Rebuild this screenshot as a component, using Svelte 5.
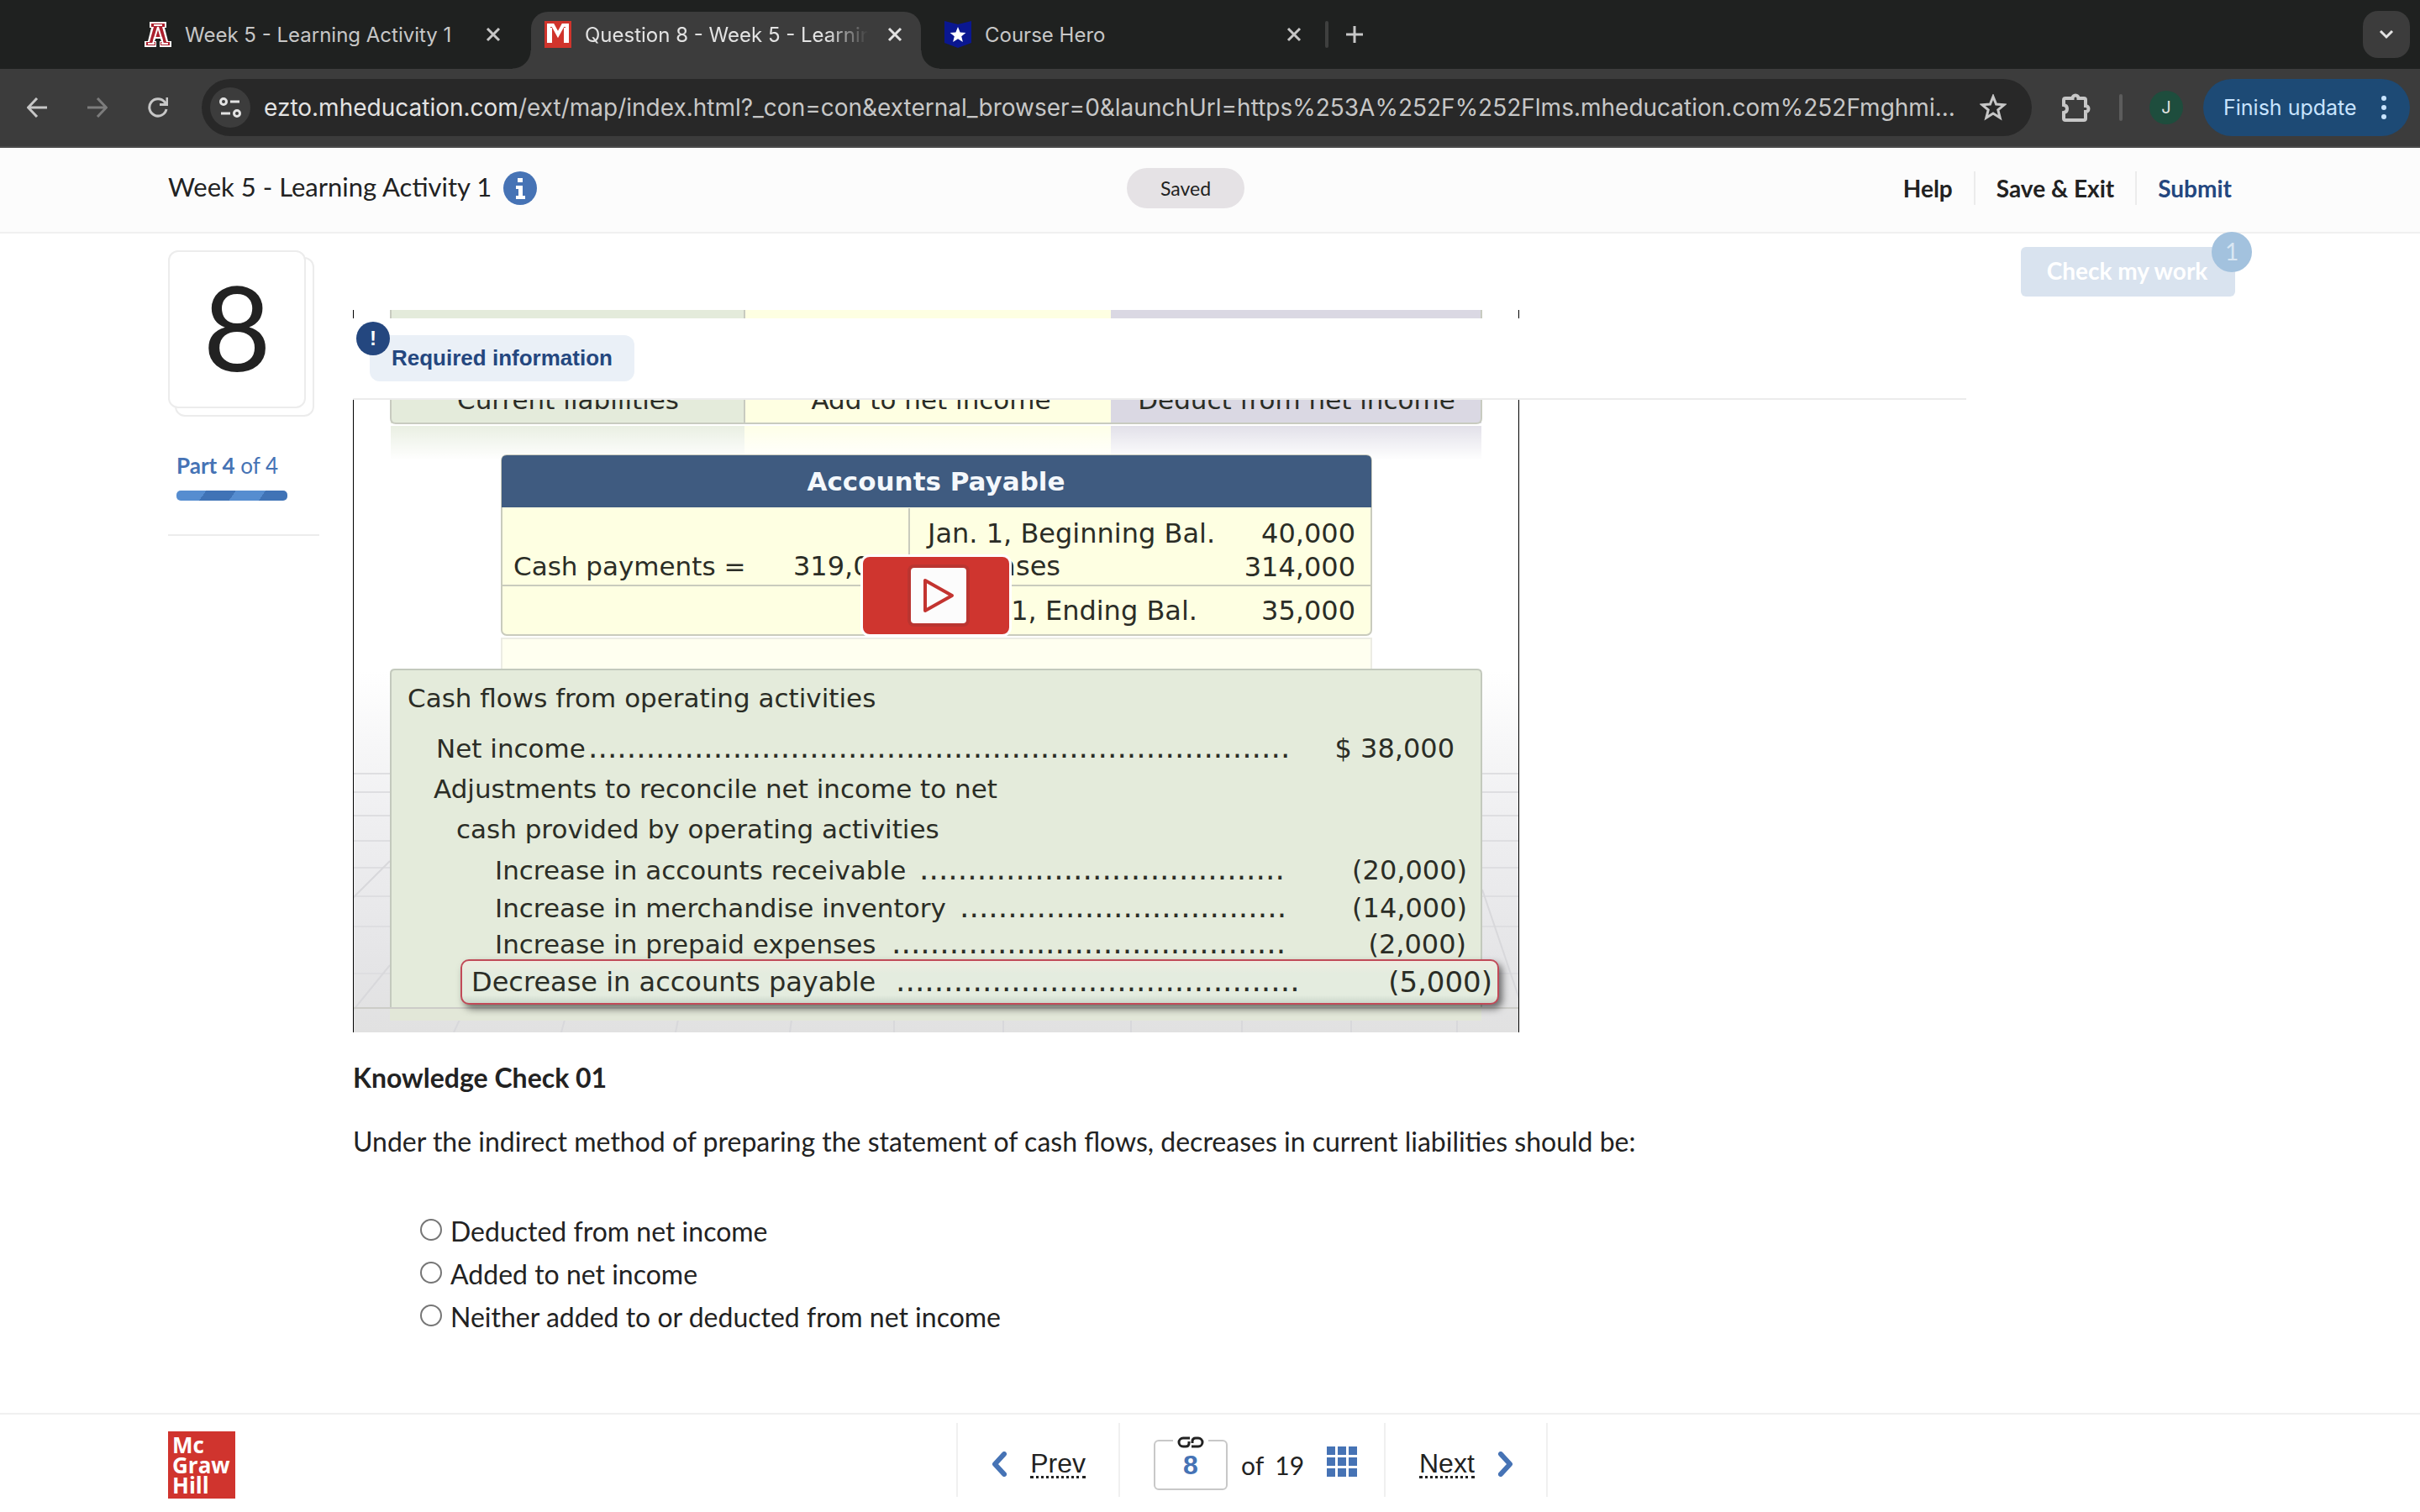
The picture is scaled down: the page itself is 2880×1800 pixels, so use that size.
<script lang="ts">
	const url = {
		host: 'ezto.mheducation.com',
		path: '/ext/map/index.html?_con=con&external_browser=0&launchUrl=https%253A%252F%252Flms.mheducation.com%252Fmghmi...'
	};

	const question = {
		number: 8,
		total: 19,
		heading: 'Knowledge Check 01',
		prompt:
			'Under the indirect method of preparing the statement of cash flows, decreases in current liabilities should be:',
		choices: [
			'Deducted from net income',
			'Added to net income',
			'Neither added to or deducted from net income'
		]
	};

	// lines of the cash flow panel on the slide
	const lines = [
		{ label: 'Cash flows from operating activities', x: 65, y: 473 },
		{ label: 'Net income', x: 99, y: 533, dots: 73, dotsX: 280, amount: '$ 38,000', right: 1311 },
		{ label: 'Adjustments to reconcile net income to net', x: 96, y: 581 },
		{ label: 'cash provided by operating activities', x: 123, y: 629 },
		{ label: 'Increase in accounts receivable', x: 169, y: 678, dots: 38, dotsX: 674, amount: '(20,000)', right: 1326 },
		{ label: 'Increase in merchandise inventory', x: 169, y: 723, dots: 34, dotsX: 722, amount: '(14,000)', right: 1326 },
		{ label: 'Increase in prepaid expenses', x: 169, y: 766, dots: 41, dotsX: 641, amount: '(2,000)', right: 1325 }
	];

	const floorLines = [552, 574, 602, 632, 664, 698, 734, 790];

	let selected = $state('');
	let current = $state(String(question.number));
</script>

<div class="page">
	<div class="tabs">
		<div class="tab first">
			<svg class="favicon" viewBox="0 0 32 32" aria-hidden="true">
				<path d="M6 1h20v7h-2l4 16h4v7H18v-7h2l-1-3h-6l-1 3h2v7H0v-7h4L8 8H6z" fill="#fff" />
				<path d="M8 3h16v4h-3l5 18h4v4H19v-4h3l-1-6H11l-1 6h3v4H2v-4h4L11 7H8z" fill="#ab1f2d" />
				<path d="M11 5h10M16 7l-6 20M16 7l6 20M11 20h10M4 27h8M20 27h8" fill="none" stroke="#fff" stroke-width="2" />
			</svg>
			<span class="tab-title">Week 5 - Learning Activity 1</span>
			<button class="close" aria-label="Close tab">
				<svg viewBox="0 0 18 18"><path d="M2 2l14 14M16 2L2 16" /></svg>
			</button>
		</div>
		<div class="tab active">
			<svg class="favicon" viewBox="0 0 32 32" aria-hidden="true">
				<rect width="32" height="32" fill="#d0342c" />
				<path d="M5 26V5h5l6 11 6-11h5v21M7 26V8M25 26V8" fill="none" stroke="#fff" stroke-width="4" />
			</svg>
			<span class="tab-title fade">Question 8 - Week 5 - Learning</span>
			<button class="close" aria-label="Close tab">
				<svg viewBox="0 0 18 18"><path d="M2 2l14 14M16 2L2 16" /></svg>
			</button>
		</div>
		<div class="tab last">
			<svg class="favicon" viewBox="0 0 32 32" aria-hidden="true">
				<path d="M0 0l16 4 16-4v26l-16 6-16-6z" fill="#0a1790" />
				<path d="M16 7l2.600 6.400 6.800.5-5.200 4.400 1.700 6.700-5.900-3.700-5.900 3.700 1.700-6.700-5.200-4.400 6.800-.5z" fill="#fff" />
			</svg>
			<span class="tab-title">Course Hero</span>
			<button class="close" aria-label="Close tab">
				<svg viewBox="0 0 18 18"><path d="M2 2l14 14M16 2L2 16" /></svg>
			</button>
		</div>
		<span class="tab-divider"></span>
		<button class="new-tab" aria-label="New tab">
			<svg viewBox="0 0 20 20"><path d="M10 0v20M0 10h20" /></svg>
		</button>
		<button class="tab-search" aria-label="Search tabs">
			<svg viewBox="0 0 18 12"><path d="M2 2l7 7 7-7" /></svg>
		</button>
	</div>

	<div class="toolbar">
		<div class="nav-buttons">
			<button aria-label="Back">
				<svg viewBox="0 0 24 24"><path d="M24 12H2M12 1L1.500 12 12 23" /></svg>
			</button>
			<button class="dim" aria-label="Forward">
				<svg viewBox="0 0 24 24"><path d="M0 12h22M12 1l10.500 11L12 23" /></svg>
			</button>
			<button aria-label="Reload">
				<svg viewBox="0 0 24 24"><path d="M22 14a10.200 10.200 0 1 1-2-8.500L22.500 8M23 0v8.500h-9" /></svg>
			</button>
		</div>
		<div class="omnibox">
			<button class="site-info" aria-label="Site information">
				<svg viewBox="0 0 26 26">
					<circle cx="5" cy="6" r="3.500" /><path d="M13 6h11M2 20h11" /><circle cx="21" cy="20" r="3.500" />
				</svg>
			</button>
			<span class="url">{url.host}<span>{url.path}</span></span>
			<button class="star" aria-label="Bookmark">
				<svg viewBox="0 0 32 32">
					<path d="M16 3l3.600 9 9.600.7-7.400 6.200 2.400 9.400-8.200-5.200-8.200 5.200 2.400-9.400L2.800 12.700l9.600-.7z" />
				</svg>
			</button>
		</div>
		<button class="puzzle" aria-label="Extensions">
			<svg viewBox="0 0 34 34">
				<path d="M4 6h8.500a3.500 3.500 0 0 1 7 0H26q2 0 2 2v7a3.500 3.500 0 0 1 0 7v8q0 2-2 2H4q-2 0-2-2v-7q4-.5 4-4.500T2 14V8q0-2 2-2z" />
			</svg>
		</button>
		<span class="tool-divider"></span>
		<span class="avatar">J</span>
		<button class="update">
			Finish update
			<svg viewBox="0 0 6 30"><circle cx="3" cy="4" r="3" /><circle cx="3" cy="15" r="3" /><circle cx="3" cy="26" r="3" /></svg>
		</button>
	</div>

	<header class="assignment">
		<div class="title">
			<h1>Week 5 - Learning Activity 1</h1>
			<button class="info" aria-label="Assignment information">
				<svg viewBox="0 0 40 40">
					<circle cx="20" cy="20" r="20" />
					<path d="M17 8h6v5h-6zM15 17h8v12h3v4H15v-4h3v-8h-3z" />
				</svg>
			</button>
		</div>
		<span class="saved">Saved</span>
		<nav>
			<a href="#help">Help</a>
			<a href="#save">Save &amp; Exit</a>
			<a href="#submit" class="submit">Submit</a>
		</nav>
	</header>

	<main>
		<aside>
			<div class="card-stack">
				<div class="number">{question.number}</div>
			</div>
			<p class="part"><b>Part 4</b> of 4</p>
			<div class="progress"></div>
			<hr />
		</aside>

		<section>
			<div class="actions">
				<button class="check">Check my work<span class="badge">1</span></button>
			</div>

			<div class="viewport">
				<svg class="slide" viewBox="0 0 1388 860" role="img" aria-label="Accounts payable example">
					<defs>
						<linearGradient id="floor" x1="0" y1="0" x2="0" y2="1">
							<stop offset="0.500" stop-color="#ffffff" />
							<stop offset="0.700" stop-color="#efeff1" />
							<stop offset="0.900" stop-color="#e5e5e7" />
							<stop offset="1" stop-color="#e1e1e1" />
						</linearGradient>
						<linearGradient id="mirror" x1="0" y1="0" x2="0" y2="1">
							<stop offset="0" stop-color="#ffffff" stop-opacity="0.200" />
							<stop offset="1" stop-color="#ffffff" />
						</linearGradient>
						<linearGradient id="highlight" x1="0" y1="0" x2="0" y2="1">
							<stop offset="0" stop-color="#f0ece2" />
							<stop offset="0.300" stop-color="#e4ecdf" />
							<stop offset="0.800" stop-color="#e4ecdf" />
							<stop offset="1" stop-color="#c9d5c9" />
						</linearGradient>
					</defs>

					<rect width="1388" height="860" fill="url(#floor)" />
					{#each floorLines as y}
						<path d="M0 {y}h44M1344 {y}h44" stroke="#dedee1" stroke-width="2" />
					{/each}
					<path d="M0 834L44 780M0 700l44-44M1344 690l44 130M120 860l14-30M248 860l8-30M384 860l6-30M520 860l4-30M644 860v-30M774 860v-30M926 860v-30M1058 860v-30M1188 860v-30M1314 860v-30" stroke="#d8d8db" stroke-width="2" />

					<rect x="45" width="421" height="135" fill="#e4ebdb" />
					<rect x="466" width="436" height="135" fill="#feffe2" />
					<rect x="902" width="441" height="135" fill="#dad8e3" />
					<path d="M45 0v129q0 6 6 6h1286q6 0 6-6V0M466 0v135" fill="none" stroke="#c8cbc0" stroke-width="2" />
					<rect x="45" y="138" width="421" height="40" fill="#e4ebdb" />
					<rect x="466" y="138" width="436" height="40" fill="#feffe2" />
					<rect x="902" y="138" width="441" height="40" fill="#dad8e3" />
					<rect x="44" y="137" width="1301" height="42" fill="url(#mirror)" />
					<g text-anchor="middle">
						<text x="256" y="118">Current liabilities</text>
						<text x="688" y="118">Add to net income</text>
						<text x="1123" y="118">Deduct from net income</text>
					</g>

					<rect x="177" y="391" width="1035" height="40" fill="#fffff0" stroke="#ecece4" stroke-width="2" />
					<rect x="177" y="173" width="1035" height="214" rx="6" fill="#feffe2" stroke="#c9cbbd" stroke-width="2" />
					<path d="M177 235v-56q0-6 6-6h1023q6 0 6 6v56z" fill="#3f5b80" />
					<path d="M662 236v92M177 328h1035" stroke="#c9cbbd" stroke-width="2" />
					<text class="table-title" x="694" y="215" text-anchor="middle">Accounts Payable</text>
					<text x="191" y="316">Cash payments =</text>
					<text class="figure" x="524" y="316">319,000</text>
					<text class="figure" x="684" y="277">Jan. 1, Beginning Bal.</text>
					<g class="figure" text-anchor="end">
						<text x="842" y="316">Purchases</text>
						<text x="1005" y="369">Dec. 31, Ending Bal.</text>
						<text x="1193" y="277">40,000</text>
						<text x="1193" y="317">314,000</text>
						<text x="1193" y="369">35,000</text>
					</g>

					<rect x="44" y="427" width="1299" height="404" rx="5" fill="#e4ebdb" />
					<path d="M45 831V433q0-5 5-5h1288q5 0 5 5v398" fill="none" stroke="#c3c9bd" stroke-width="2" />
					<path d="M0 831h1388" stroke="#ccccc8" stroke-width="2" />
					<rect x="44" y="832" width="1299" height="14" fill="#e2e7d8" />
					{#each lines as line}
						<text x={line.x} y={line.y}>{line.label}</text>
						{#if line.dots}
							<text class="leader" x={line.dotsX} y={line.y}>{'.'.repeat(line.dots)}</text>
							<text class="figure" x={line.right} y={line.y} text-anchor="end">{line.amount}</text>
						{/if}
					{/each}

					<rect class="highlight" x="129" y="774" width="1234" height="52" rx="9" fill="url(#highlight)" />
					<text class="figure" x="141" y="811">Decrease in accounts payable</text>
					<text class="leader" x="646" y="811">{'.'.repeat(42)}</text>
					<text class="large" x="1356" y="812" text-anchor="end">(5,000)</text>

					<path d="M0 0h1v860h-1zM1387 0h1v860h-1z" fill="#000" />
				</svg>

				<button class="play" aria-label="Play video">
					<span>
						<svg viewBox="0 0 40 44"><path d="M4 4v36l32-18z" /></svg>
					</span>
				</button>

				<div class="required">
					<span class="alert">!</span>
					<span class="required-label">Required information</span>
				</div>
			</div>

			<h2>{question.heading}</h2>
			<p class="prompt">{question.prompt}</p>
			<div class="choices">
				{#each question.choices as choice}
					<label>
						<input type="radio" name="answer" value={choice} bind:group={selected} />
						{choice}
					</label>
				{/each}
			</div>
		</section>
	</main>

	<footer>
		<div class="logo">
			<span>Mc</span>
			<span>Graw</span>
			<span>Hill</span>
		</div>
		<div class="pager">
			<a class="prev" href="#prev">
				<svg viewBox="0 0 18 30"><path d="M15 3L4 15l11 12" /></svg>
				<span>Prev</span>
			</a>
			<div class="position">
				<label class="jump">
					<svg viewBox="0 0 34 16">
						<path d="M16 3H8a5 5 0 0 0 0 10h3q4 0 4-4V7M18 13h8a5 5 0 0 0 0-10h-3q-4 0-4 4v2" />
					</svg>
					<input aria-label="Question number" bind:value={current} />
				</label>
				<span class="total">of <span>{question.total}</span></span>
				<button class="grid" aria-label="All questions">
					<svg viewBox="0 0 36 36">
						{#each [0, 13, 26] as y}
							{#each [0, 13, 26] as x}
								<rect {x} {y} width="10" height="10" />
							{/each}
						{/each}
					</svg>
				</button>
			</div>
			<a class="next" href="#next">
				<span>Next</span>
				<svg viewBox="0 0 18 30"><path d="M3 3l11 12L3 27" /></svg>
			</a>
		</div>
	</footer>
</div>

<style>
	:global(body) {
		background: #fff;
	}

	.page {
		display: flex;
		flex-direction: column;
		min-height: 100vh;
		font-family: Lato, sans-serif;
		font-size: 32px;
		color: #222;
	}

	button {
		padding: 0;
		border: none;
		background: none;
		font: inherit;
		color: inherit;
		cursor: pointer;
	}

	svg {
		display: block;
	}

	a {
		color: inherit;
		text-decoration: none;
	}

	h1,
	h2,
	p {
		margin: 0;
	}

	/* browser chrome */
	.tabs {
		display: flex;
		align-items: center;
		height: 82px;
		background: #1f2120;
		color: #c7c7c7;
		font-family: Inter, sans-serif;
		font-size: 24px;
	}

	.tab {
		display: flex;
		align-items: center;
		gap: 16px;
		box-sizing: border-box;
		height: 68px;
	}

	.tab.first {
		width: 632px;
		padding: 0 36px 0 172px;
	}

	.tab.active {
		position: relative;
		align-self: flex-end;
		width: 464px;
		padding: 0 22px 14px 16px;
		border-radius: 20px 20px 0 0;
		background: #3c3c3c;
		color: #e3e3e3;
	}

	.tab.active::before,
	.tab.active::after {
		content: '';
		position: absolute;
		bottom: 0;
		width: 22px;
		height: 22px;
	}

	.tab.active::before {
		right: 100%;
		background: radial-gradient(circle at 0 0, transparent 21px, #3c3c3c 22px);
	}

	.tab.active::after {
		left: 100%;
		background: radial-gradient(circle at 100% 0, transparent 21px, #3c3c3c 22px);
	}

	.tab.last {
		width: 481px;
		padding: 0 28px;
	}

	.favicon {
		flex: none;
		width: 32px;
		height: 32px;
	}

	.tab-title {
		flex: 1;
		overflow: hidden;
		white-space: nowrap;
	}

	.fade {
		mask-image: linear-gradient(to right, #000 84%, transparent 98%);
	}

	.tabs button svg {
		fill: none;
		stroke: currentColor;
		stroke-width: 3;
	}

	.close svg {
		width: 18px;
		height: 18px;
	}

	.tab-divider {
		width: 4px;
		height: 32px;
		border-radius: 2px;
		background: #3f403f;
	}

	.new-tab {
		margin-left: 21px;
	}

	.new-tab svg {
		width: 20px;
		height: 20px;
	}

	.tab-search {
		display: grid;
		place-items: center;
		width: 56px;
		height: 56px;
		margin: 0 12px 0 auto;
		border-radius: 18px;
		background: #3c3c3c;
		color: #e3e3e3;
	}

	.tab-search svg {
		width: 18px;
		height: 12px;
	}

	.toolbar {
		display: flex;
		align-items: center;
		box-sizing: border-box;
		height: 94px;
		padding: 0 12px 0 32px;
		border-bottom: 2px solid #4a4a4a;
		background: #3c3c3c;
		color: #c7c7c7;
		font-family: Inter, sans-serif;
		font-size: 28px;
	}

	.nav-buttons {
		display: flex;
		gap: 48px;
		width: 208px;
	}

	.nav-buttons svg {
		width: 24px;
		height: 24px;
		fill: none;
		stroke: currentColor;
		stroke-width: 3;
	}

	.dim {
		color: #7c7c7c;
	}

	.omnibox {
		display: flex;
		flex: 1;
		align-items: center;
		gap: 16px;
		min-width: 0;
		height: 68px;
		padding: 0 30px 0 10px;
		border-radius: 34px;
		background: #282828;
	}

	.site-info {
		display: grid;
		flex: none;
		place-items: center;
		width: 48px;
		height: 48px;
		border-radius: 50%;
		background: #3c3c3c;
		color: #e3e3e3;
	}

	.site-info svg {
		width: 26px;
		height: 26px;
		fill: none;
		stroke: currentColor;
		stroke-width: 3;
	}

	.url {
		flex: 1;
		overflow: hidden;
		white-space: nowrap;
		color: #e3e3e3;
	}

	.url span {
		color: #c7c7c7;
	}

	.star svg {
		width: 32px;
		height: 32px;
		fill: none;
		stroke: currentColor;
		stroke-width: 3;
	}

	.puzzle {
		margin: 0 34px 0 36px;
	}

	.puzzle svg {
		width: 34px;
		height: 34px;
		fill: none;
		stroke: currentColor;
		stroke-width: 4;
	}

	.tool-divider {
		width: 4px;
		height: 32px;
		margin-right: 32px;
		border-radius: 2px;
		background: #5c5c5c;
	}

	.avatar {
		display: grid;
		place-items: center;
		width: 40px;
		height: 40px;
		margin-right: 24px;
		border-radius: 50%;
		background: #1e4d3d;
		color: #e3e3e3;
		font-size: 20px;
	}

	.update {
		display: flex;
		align-items: center;
		justify-content: space-between;
		width: 246px;
		height: 68px;
		padding: 0 28px 0 24px;
		border-radius: 34px;
		background: #1d4a75;
		color: #c8e4ff;
		font-size: 25px;
		white-space: nowrap;
	}

	.update svg {
		width: 6px;
		height: 30px;
		fill: currentColor;
	}

	/* assignment header */
	.assignment {
		display: flex;
		align-items: center;
		box-sizing: border-box;
		height: 102px;
		padding: 0 224px 4px 200px;
		border-bottom: 2px solid #f0f0f0;
		background: #fcfcfc;
	}

	.title {
		display: flex;
		align-items: center;
		gap: 14px;
		width: 1141px;
	}

	h1 {
		padding-bottom: 4px;
		font-size: 31px;
		font-weight: 400;
	}

	.info svg {
		width: 40px;
		height: 40px;
		fill: #4673b5;
	}

	.info path {
		fill: #fff;
	}

	.saved {
		width: 140px;
		border-radius: 24px;
		background: #e5e2e5;
		font-size: 23px;
		line-height: 48px;
		text-align: center;
	}

	nav {
		display: flex;
		margin-left: auto;
		font-size: 28px;
		font-weight: 700;
		line-height: 40px;
	}

	nav a + a {
		margin-left: 25px;
		padding-left: 25px;
		border-left: 2px solid #ececec;
	}

	.submit {
		color: #24477f;
	}

	/* question */
	main {
		display: grid;
		flex: 1;
		grid-template-columns: 180px minmax(0, 1fr);
		gap: 40px;
		padding: 0 220px 0 200px;
	}

	.card-stack {
		position: relative;
		width: 174px;
		height: 198px;
		margin-top: 20px;
	}

	.card-stack::before {
		content: '';
		position: absolute;
		inset: 8px 0 0 8px;
		border: 2px solid #ececec;
		border-radius: 12px;
	}

	.number {
		position: relative;
		box-sizing: border-box;
		width: 164px;
		height: 188px;
		border: 2px solid #ececec;
		border-radius: 12px;
		background: #fff;
		font-size: 140px;
		line-height: 176px;
		text-align: center;
	}

	.part {
		margin: 40px 0 12px 10px;
		color: #4673b5;
		font-size: 26px;
		line-height: 36px;
	}

	.progress {
		width: 132px;
		height: 12px;
		margin-left: 10px;
		border-radius: 5px;
		background: repeating-linear-gradient(125deg, #568dd0 0 29px, #4073b6 29px 58px);
	}

	hr {
		height: 2px;
		margin: 40px 0 0;
		border: none;
		background: #ececec;
	}

	.actions {
		display: flex;
		justify-content: flex-end;
		padding: 16px 0;
	}

	.check {
		position: relative;
		width: 255px;
		height: 59px;
		padding: 0 2px 4px 0;
		border-radius: 6px;
		background: #d9e3ef;
		color: #fff;
		font-size: 28px;
		font-weight: 700;
	}

	.badge {
		position: absolute;
		top: -18px;
		right: -20px;
		width: 48px;
		height: 48px;
		border-radius: 50%;
		background: #a3c2de;
		color: #d9e7f3;
		font-weight: 400;
		line-height: 46px;
	}

	.viewport {
		position: relative;
	}

	.slide {
		width: 1388px;
		height: 860px;
		fill: #2b2d26;
		font-family: 'DejaVu Sans', sans-serif;
		font-size: 31px;
	}

	.table-title {
		fill: #f4f8fc;
		font-weight: 700;
	}

	.figure {
		font-size: 32px;
	}

	.large {
		font-size: 34px;
	}

	.leader {
		font-size: 36px;
	}

	.highlight {
		stroke: #c14a58;
		stroke-width: 2;
		filter: drop-shadow(4px 5px 4px #0008);
	}

	.play {
		position: absolute;
		top: 294px;
		left: 607px;
		display: grid;
		place-items: center;
		width: 174px;
		height: 92px;
		border-radius: 8px;
		background: #cf352f;
		box-shadow: 0 0 0 3px #fff;
	}

	.play span {
		display: grid;
		place-items: center;
		width: 66px;
		height: 66px;
		margin-left: 6px;
		border-radius: 4px;
		background: #fcfcfc;
		box-shadow: 0 0 0 4px #ba3530;
	}

	.play svg {
		width: 40px;
		height: 44px;
		fill: none;
		stroke: #c33430;
		stroke-width: 4;
		stroke-linejoin: round;
	}

	.required {
		position: absolute;
		top: 10px;
		right: 320px;
		left: 0;
		box-sizing: border-box;
		height: 97px;
		padding: 20px;
		border-bottom: 2px solid #ececec;
		background: #fff;
		font-family: 'Liberation Sans', sans-serif;
		font-weight: 700;
	}

	.alert {
		position: absolute;
		top: 4px;
		left: 4px;
		width: 40px;
		border-radius: 50%;
		background: #24477f;
		color: #fff;
		font-size: 24px;
		line-height: 40px;
		text-align: center;
	}

	.required-label {
		display: inline-block;
		padding: 0 26px;
		border-radius: 12px;
		background: #eaf0f7;
		color: #24477f;
		font-size: 26px;
		line-height: 55px;
	}

	h2 {
		margin-top: 34px;
		font-size: 32px;
		font-weight: 700;
		line-height: 40px;
	}

	.prompt {
		margin-top: 36px;
		line-height: 40px;
	}

	.choices {
		display: grid;
		gap: 11px;
		margin: 67px 0 0 80px;
	}

	.choices label {
		display: flex;
		align-items: center;
		gap: 10px;
		line-height: 40px;
	}

	.choices input {
		appearance: none;
		box-sizing: border-box;
		width: 26px;
		height: 26px;
		margin: 0 0 4px;
		border: 2px solid #767676;
		border-radius: 50%;
		background: #fff;
	}

	.choices input:checked {
		border-color: #4673b5;
		background: radial-gradient(#4673b5 6px, #fff 7px);
	}

	/* footer */
	footer {
		display: flex;
		align-items: flex-start;
		box-sizing: border-box;
		height: 118px;
		padding: 10px 200px 0;
		border-top: 2px solid #f0f0f0;
	}

	.logo {
		display: grid;
		box-sizing: border-box;
		width: 80px;
		height: 80px;
		margin: 10px 858px 0 0;
		padding: 4px 5px;
		background: #d0342e;
		color: #fff;
		font-family: 'Open Sans', sans-serif;
		font-size: 26px;
		font-weight: 700;
		line-height: 24px;
	}

	.pager {
		display: flex;
		height: 88px;
		border: solid #f0f0f0;
		border-width: 0 2px;
		font-family: 'Liberation Sans', sans-serif;
	}

	.pager a {
		display: flex;
		align-items: center;
		justify-content: space-between;
		width: 112px;
		padding: 26px 39px 16px 40px;
		line-height: 42px;
	}

	.pager a span {
		border-bottom: 3px dotted #222;
		line-height: 30px;
	}

	.pager a svg {
		width: 18px;
		height: 30px;
		fill: none;
		stroke: #4673b5;
		stroke-width: 6;
		stroke-linecap: round;
		stroke-linejoin: round;
	}

	.position {
		display: flex;
		box-sizing: border-box;
		width: 318px;
		padding: 20px 32px 0 40px;
		border: solid #f0f0f0;
		border-width: 0 2px;
	}

	.jump {
		position: relative;
	}

	.jump svg {
		position: absolute;
		top: -5px;
		left: 23px;
		width: 34px;
		height: 16px;
		padding: 0 4px;
		background: #fff;
		fill: none;
		stroke: #222;
		stroke-width: 3;
	}

	.jump input {
		box-sizing: border-box;
		width: 88px;
		height: 60px;
		padding: 0;
		border: 2px solid #c8c8c8;
		border-radius: 6px;
		color: #4673b5;
		font-family: inherit;
		font-size: 32px;
		font-weight: 700;
		text-align: center;
	}

	.total {
		margin: 0 auto 0 16px;
		font-family: Lato, sans-serif;
		font-size: 30px;
		line-height: 60px;
	}

	.total span {
		margin-left: 6px;
	}

	.grid {
		align-self: flex-start;
		margin-top: 8px;
	}

	.grid svg {
		width: 36px;
		height: 36px;
		fill: #4673b5;
	}
</style>
